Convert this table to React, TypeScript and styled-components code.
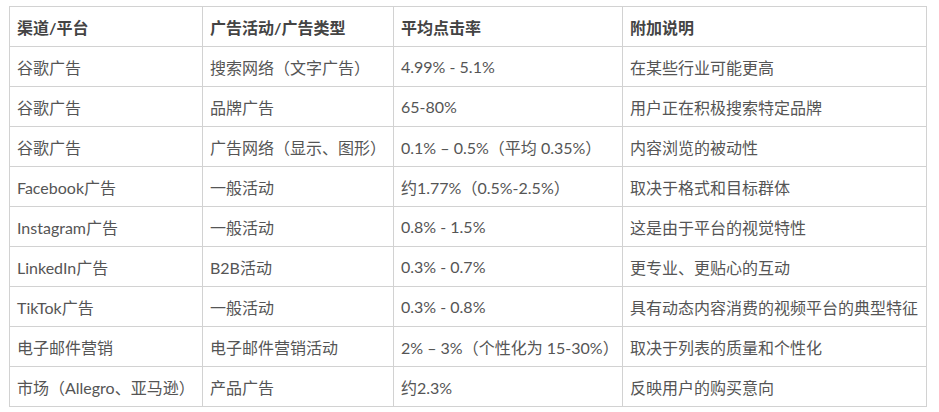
import * as React from "react";
import styled, { createGlobalStyle } from "styled-components";

const GlobalStyle = createGlobalStyle`
  html, body {
    margin: 0;
    padding: 0;
    background: #fff;
  }
`;

const SPage = styled.div`
  padding: 6px 0 0 9px;
  font-family: Lato, "Noto Sans CJK SC", sans-serif;
  font-size: 16px;
  color: #555;
`;

const STable = styled.table`
  border-collapse: collapse;
  table-layout: fixed;
  width: 917px;
`;

const SCell = styled.td<{ $head?: boolean }>`
  border: 1px solid #d2d2d2;
  height: 39px;
  padding: 0 7px;
  text-align: left;
  vertical-align: middle;
  white-space: nowrap;
  font-weight: ${p => (p.$head ? 700 : 400)};
  color: ${p => (p.$head ? "#444" : "#555")};
`;

const columns = [
  { title: "渠道/平台", width: 193 },
  { title: "广告活动/广告类型", width: 191 },
  { title: "平均点击率", width: 229 },
  { title: "附加说明", width: 304 },
];

const rows: string[][] = [
  ["谷歌广告", "搜索网络（文字广告）", "4.99% - 5.1%", "在某些行业可能更高"],
  ["谷歌广告", "品牌广告", "65-80%", "用户正在积极搜索特定品牌"],
  ["谷歌广告", "广告网络（显示、图形）", "0.1% – 0.5%（平均 0.35%）", "内容浏览的被动性"],
  ["Facebook广告", "一般活动", "约1.77%（0.5%-2.5%）", "取决于格式和目标群体"],
  ["Instagram广告", "一般活动", "0.8% - 1.5%", "这是由于平台的视觉特性"],
  ["LinkedIn广告", "B2B活动", "0.3% - 0.7%", "更专业、更贴心的互动"],
  ["TikTok广告", "一般活动", "0.3% - 0.8%", "具有动态内容消费的视频平台的典型特征"],
  ["电子邮件营销", "电子邮件营销活动", "2% – 3%（个性化为 15-30%）", "取决于列表的质量和个性化"],
  ["市场（Allegro、亚马逊）", "产品广告", "约2.3%", "反映用户的购买意向"],
];

const App = () => (
  <SPage>
    <GlobalStyle />
    <STable>
      <colgroup>
        {columns.map(c => (
          <col key={c.title} style={{ width: c.width }} />
        ))}
      </colgroup>
      <thead>
        <tr>
          {columns.map(c => (
            <SCell as="th" $head key={c.title}>
              {c.title}
            </SCell>
          ))}
        </tr>
      </thead>
      <tbody>
        {rows.map((row, i) => (
          <tr key={`row:${i}`}>
            {row.map((cell, j) => (
              <SCell key={`cell:${i}:${j}`}>{cell}</SCell>
            ))}
          </tr>
        ))}
      </tbody>
    </STable>
  </SPage>
);

export default App;
